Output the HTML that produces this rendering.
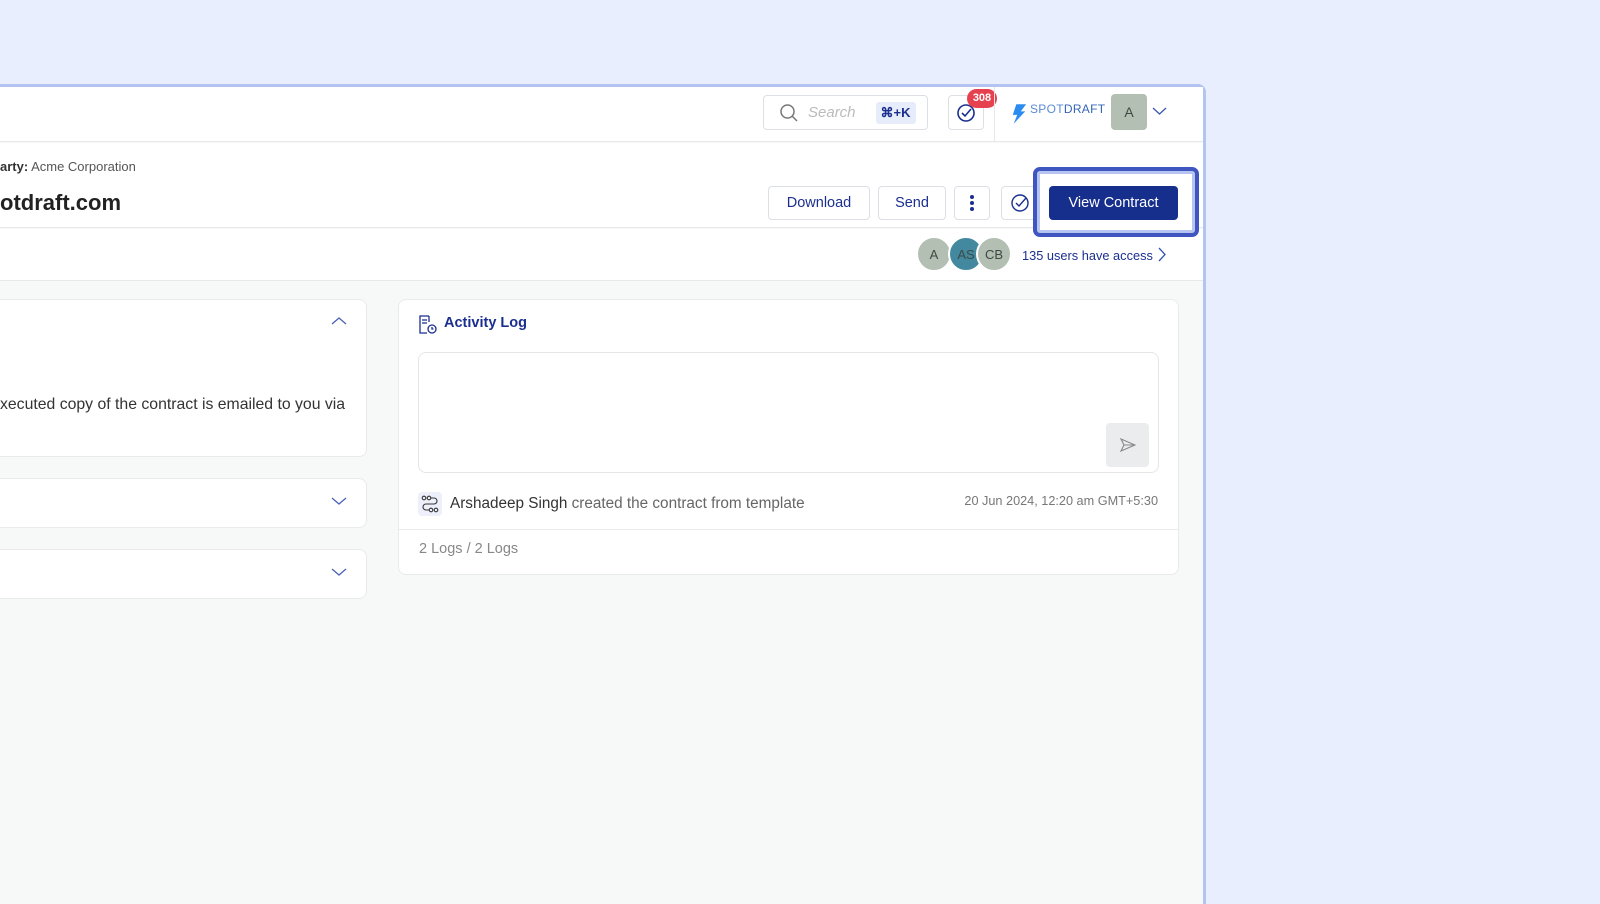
<!DOCTYPE html>
<html><head><meta charset="utf-8"><style>
*{box-sizing:border-box;margin:0;padding:0}
body{width:1600px;height:883px;background:#e8eefd;font-family:"Liberation Sans",sans-serif;position:relative;overflow:hidden;color:#222}
.a{position:absolute}
.win{left:0;top:84px;width:1206px;height:820px;border:3px solid #b4c4f0;border-left:none;border-bottom:none;border-top-right-radius:8px;background:#f7f8f8}
.bar{background:#fff;border-bottom:1px solid #e6e8ea}
.btn{border:1px solid #dcdfe3;border-radius:4px;background:#fff;color:#1b2f8f;font-size:14.5px;display:flex;align-items:center;justify-content:center}
.card{background:#fff;border:1px solid #e8eaec;border-radius:8px}
.av{width:36px;height:36px;border-radius:50%;display:flex;align-items:center;justify-content:center;font-size:13px;color:#3d4a44;border:2px solid #fff}
</style></head><body>
<div class="a win"></div>
<div class="a bar" style="left:0;top:87px;width:1203px;height:55px"></div>
<div class="a bar" style="left:0;top:143px;width:1203px;height:85px"></div>
<div class="a bar" style="left:0;top:229px;width:1203px;height:52px"></div>
<div class="a btn" style="left:763px;top:95px;width:165px;height:35px;justify-content:flex-start;padding-left:15px">
<svg width="20" height="20" viewBox="0 0 20 20"><circle cx="8.5" cy="8.5" r="6.5" fill="none" stroke="#777" stroke-width="1.5"/><path d="M13 13l5 5" stroke="#777" stroke-width="1.5"/></svg>
<span style="color:#bbb;font-style:italic;font-size:15px;margin-left:9px">Search</span>
<span style="margin-left:20px;background:#e7ecfb;color:#1b2f8f;font-size:13px;font-weight:bold;padding:3px 5px;border-radius:3px">⌘+K</span></div>
<div class="a btn" style="left:948px;top:95px;width:36px;height:35px"><svg width="20" height="20" viewBox="0 0 20 20"><circle cx="10" cy="10" r="8" fill="none" stroke="#1b2f8f" stroke-width="1.6"/><path d="M6 10l3 3 6-7" fill="none" stroke="#1b2f8f" stroke-width="1.6"/></svg></div>
<div class="a" style="left:967px;top:89px;width:30px;height:19px;background:#e5414f;border-radius:10px;color:#fff;font-size:11px;font-weight:bold;text-align:center;line-height:19px">308</div>
<div class="a" style="left:994px;top:87px;width:1px;height:55px;background:#e6e8ea"></div>
<svg class="a" style="left:1011px;top:103px" width="16" height="22" viewBox="0 0 18 24"><path d="M6 1h11l-6 8h5L3 23l4-10H2z" fill="#2b8cf0"/></svg>
<div class="a" style="left:1030px;top:102px;font-size:12px;letter-spacing:.3px;color:#5b8ad6">SPOT<span style="color:#3465b8">DRAFT</span></div>
<div class="a" style="left:1111px;top:94px;width:36px;height:36px;background:#b3bfb3;border-radius:4px;color:#3d4a44;font-size:14px;display:flex;align-items:center;justify-content:center">A</div>
<svg class="a" style="left:1152px;top:106px" width="15" height="10"><path d="M1 2l6.5 6 6.5-6" fill="none" stroke="#3a55b0" stroke-width="1.3"/></svg>
<div class="a" style="left:0;top:159px;font-size:13px;color:#555"><b style="color:#333">arty:</b> Acme Corporation</div>
<div class="a" style="left:0;top:190px;font-size:22px;font-weight:bold;color:#222">otdraft.com</div>
<div class="a btn" style="left:768px;top:186px;width:102px;height:34px">Download</div>
<div class="a btn" style="left:878px;top:186px;width:68px;height:34px">Send</div>
<div class="a btn" style="left:954px;top:186px;width:36px;height:34px"><svg width="6" height="18"><circle cx="3" cy="3" r="2" fill="#1b2f8f"/><circle cx="3" cy="9" r="2" fill="#1b2f8f"/><circle cx="3" cy="15" r="2" fill="#1b2f8f"/></svg></div>
<div class="a btn" style="left:1001px;top:186px;width:36px;height:34px;justify-content:flex-start;padding-left:8px"><svg width="20" height="20" viewBox="0 0 20 20"><circle cx="10" cy="10" r="8" fill="none" stroke="#1b2f8f" stroke-width="1.4"/><path d="M6 10l3 3 7-8" fill="none" stroke="#1b2f8f" stroke-width="1.4"/></svg></div>
<div class="a" style="left:1033px;top:167px;width:166px;height:70px;border:4px solid #3f56c0;border-radius:7px;background:#fff;box-shadow:inset 0 0 0 3px #b5c4f0"></div>
<div class="a" style="left:1049px;top:186px;width:129px;height:34px;background:#162f8c;border-radius:4px;color:#fff;font-size:14.5px;display:flex;align-items:center;justify-content:center">View Contract</div>
<div class="a av" style="left:916px;top:236px;background:#b3bfb3">A</div>
<div class="a av" style="left:948px;top:236px;background:#4289a0">AS</div>
<div class="a av" style="left:976px;top:236px;background:#b3bfb3">CB</div>
<div class="a" style="left:1022px;top:248px;font-size:12.8px;color:#1b2f8f">135 users have access</div>
<svg class="a" style="left:1157px;top:247px" width="9" height="15"><path d="M2 1l6 6.5-6 6.5" fill="none" stroke="#3a55b0" stroke-width="1.3"/></svg>
<div class="a card" style="left:-10px;top:299px;width:377px;height:158px"></div>
<svg class="a" style="left:331px;top:316px" width="16" height="10"><path d="M1 8l7-6 7 6" fill="none" stroke="#4a62b8" stroke-width="1.3"/></svg>
<div class="a" style="left:0;top:396px;font-size:15.8px;color:#333">xecuted copy of the contract is emailed to you via</div>
<div class="a card" style="left:-10px;top:478px;width:377px;height:50px"></div>
<svg class="a" style="left:331px;top:496px" width="16" height="10"><path d="M1 2l7 6 7-6" fill="none" stroke="#4a62b8" stroke-width="1.3"/></svg>
<div class="a card" style="left:-10px;top:549px;width:377px;height:50px"></div>
<svg class="a" style="left:331px;top:567px" width="16" height="10"><path d="M1 2l7 6 7-6" fill="none" stroke="#4a62b8" stroke-width="1.3"/></svg>
<div class="a card" style="left:398px;top:299px;width:781px;height:276px"></div>
<svg class="a" style="left:417px;top:314px" width="21" height="21" viewBox="0 0 21 21" fill="none" stroke="#1b2f8f" stroke-width="1.3"><path d="M12 2H3v17h7"/><path d="M5 6h5M5 9h5M12 2v6"/><circle cx="15" cy="15" r="4"/><path d="M15 13v2h1.5"/></svg>
<div class="a" style="left:444px;top:315px;font-size:14.5px;font-weight:bold;color:#1b2f8f">Activity Log</div>
<div class="a" style="left:418px;top:352px;width:741px;height:121px;border:1px solid #e4e6e8;border-radius:8px;background:#fff"></div>
<div class="a" style="left:1106px;top:423px;width:43px;height:44px;background:#ebecee;border-radius:4px;display:flex;align-items:center;justify-content:center"><svg width="16" height="14" viewBox="0 0 16 14"><path d="M1 1l14 6-14 6 3-6z M4 7h11" fill="none" stroke="#888" stroke-width="1.1"/></svg></div>
<div class="a" style="left:418px;top:492px;width:24px;height:24px;background:#edf0fb;border-radius:4px;display:flex;align-items:center;justify-content:center"><svg width="18" height="18" viewBox="0 0 18 18" fill="none" stroke="#333" stroke-width="1.1"><circle cx="3" cy="3" r="1.8"/><circle cx="8" cy="3" r="1.8"/><circle cx="10" cy="15" r="1.8"/><circle cx="15" cy="15" r="1.8"/><path d="M10 3h3a3 3 0 010 6H5a3 3 0 000 6h3"/></svg></div>
<div class="a" style="left:450px;top:495px;font-size:15.3px;color:#666"><span style="color:#333">Arshadeep Singh</span> created the contract from template</div>
<div class="a" style="left:900px;top:494px;width:258px;text-align:right;font-size:12.7px;color:#777">20 Jun 2024, 12:20 am GMT+5:30</div>
<div class="a" style="left:399px;top:529px;width:779px;height:1px;background:#e8eaec"></div>
<div class="a" style="left:419px;top:541px;font-size:14.5px;color:#888">2 Logs / 2 Logs</div>
</body></html>
